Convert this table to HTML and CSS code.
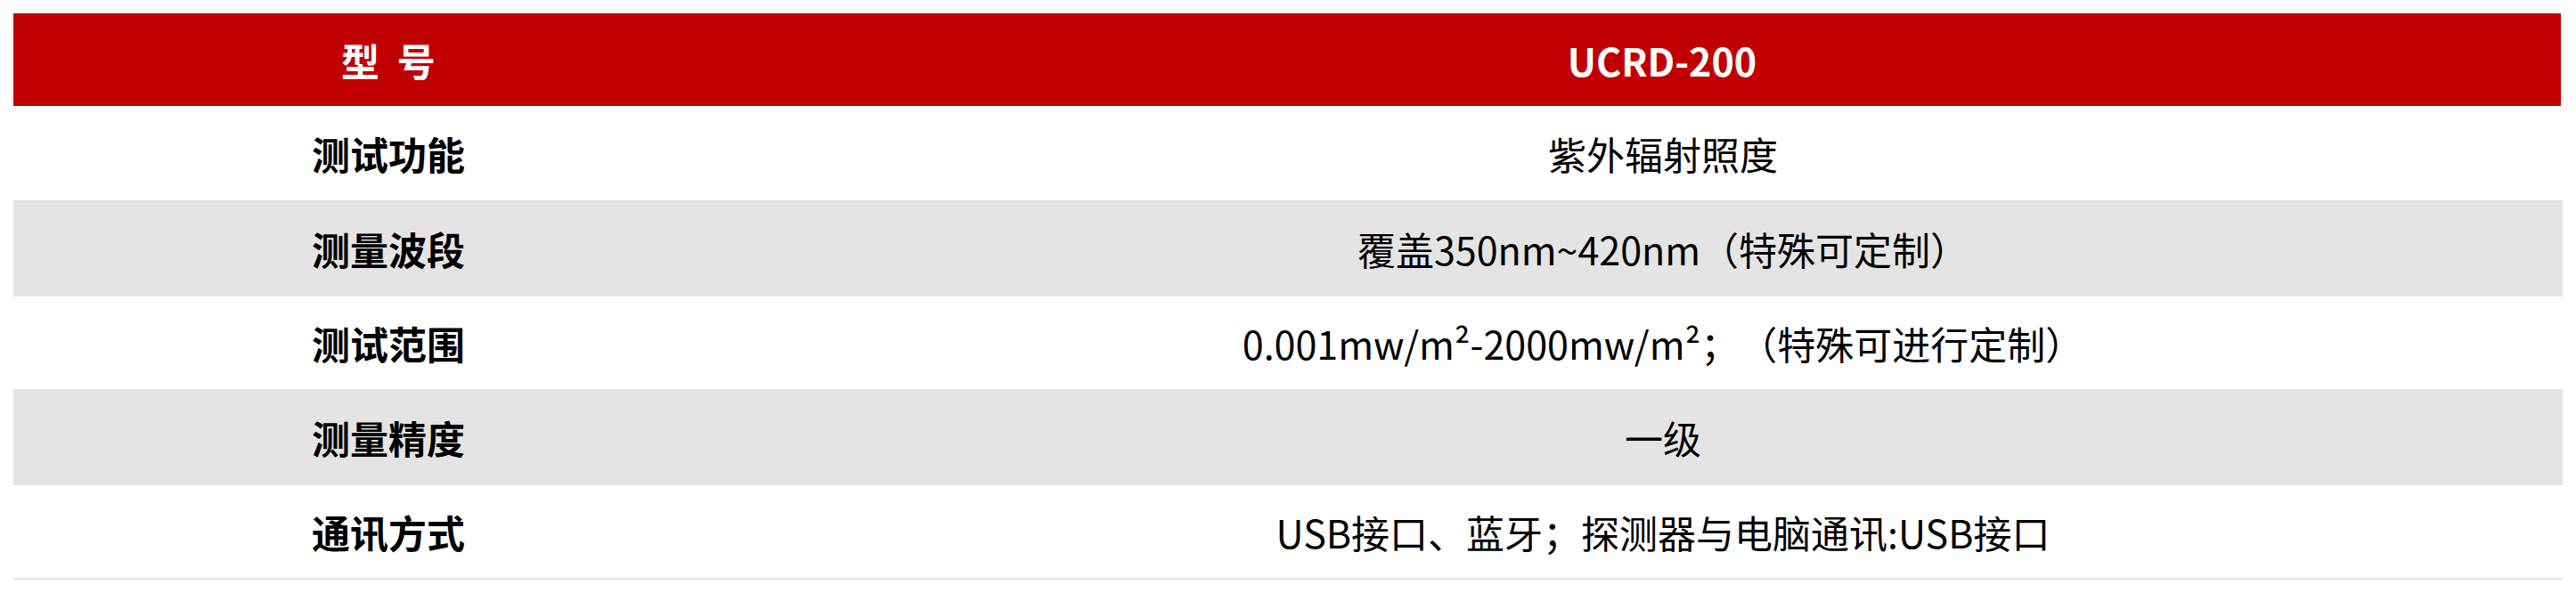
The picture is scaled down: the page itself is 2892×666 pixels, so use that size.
FILE: index.html
```html
<!DOCTYPE html>
<html lang="zh-CN">
<head>
<meta charset="utf-8">
<title>UCRD-200</title>
<link rel="stylesheet" href="styles.css">
</head>
<body>
<div class="spec-table">
  <div class="row head">
    <div class="cell label">型&nbsp;号</div>
    <div class="cell value">UCRD-200</div>
  </div>
  <div class="row r1">
    <div class="cell label">测试功能</div>
    <div class="cell value">紫外辐射照度</div>
  </div>
  <div class="row r2 alt">
    <div class="cell label">测量波段</div>
    <div class="cell value">覆盖350nm~420nm（特殊可定制）</div>
  </div>
  <div class="row r3">
    <div class="cell label">测试范围</div>
    <div class="cell value">0.001mw/m²-2000mw/m²；（特殊可进行定制）</div>
  </div>
  <div class="row r4 alt">
    <div class="cell label">测量精度</div>
    <div class="cell value">一级</div>
  </div>
  <div class="row r5 last">
    <div class="cell label">通讯方式</div>
    <div class="cell value">USB接口、蓝牙；探测器与电脑通讯:USB接口</div>
  </div>
</div>
</body>
</html>
```
FILE: styles.css
```css
html, body {
  margin: 0;
  padding: 0;
  background: #ffffff;
}
body {
  padding: 15px 15px 0 15px;
  font-family: "Noto Sans CJK SC", "Noto Sans", sans-serif;
  color: #000000;
  text-spacing-trim: space-all;
}
.spec-table {
  width: 2862px;
  display: flex;
  flex-direction: column;
}
.row {
  display: grid;
  grid-template-columns: 842px 1fr;
  height: 106px;
  background: #ffffff;
}
.row.head {
  height: 104px;
  background: #c00000;
  color: #ffffff;
  margin-right: 2px;
}
.row.alt {
  background: #e4e4e4;
}
.row.r2, .row.r4 {
  height: 108px;
}
.row.r3 {
  height: 104px;
}
.row.last {
  height: 104px;
  border-bottom: 2px solid #e4e4e4;
}
.cell {
  display: flex;
  align-items: center;
  justify-content: center;
  font-size: 43px;
  line-height: 1;
  white-space: nowrap;
}
.cell.label {
  font-weight: 700;
}
.cell.value {
  font-weight: 400;
}
.row.head .cell {
  font-weight: 700;
}
.row.head .cell.label {
  word-spacing: 10px;
}
```
